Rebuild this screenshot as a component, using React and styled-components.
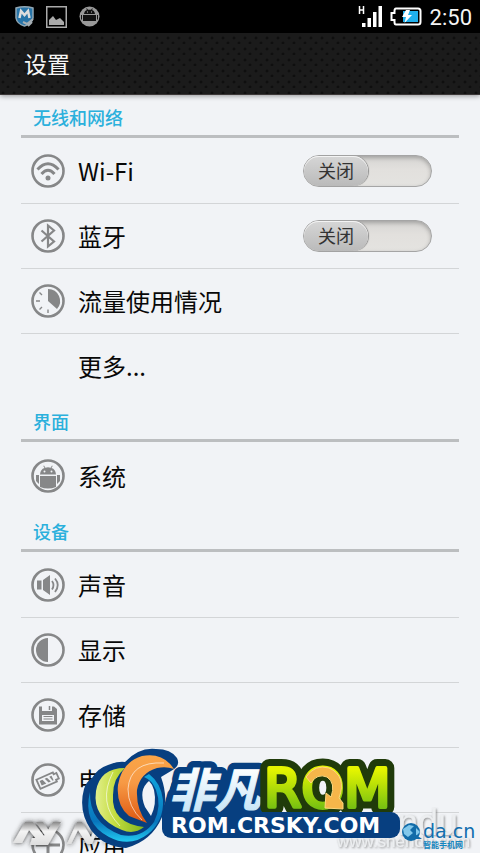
import React, { useState } from "react";
import styled, { createGlobalStyle } from "styled-components";

const GlobalStyle = createGlobalStyle`
  * { box-sizing: border-box; }
  body {
    margin: 0;
    background: #f1f3f6;
    font-family: "Noto Sans CJK SC", sans-serif;
  }
`;

const Screen = styled.div`
  position: relative;
  height: 100vh;
  overflow: hidden;
  background: #f1f3f6;
  color: #080808;
`;

const StatusBar = styled.div`
  display: flex;
  align-items: center;
  justify-content: space-between;
  height: 33px;
  padding: 0 8px 0 15px;
  background: #000;
`;

const StatusGroup = styled.div`
  display: flex;
  align-items: center;
  gap: ${(p) => p.$gap}px;
  svg { display: block; }
`;

const Clock = styled.time`
  font: 400 22px/32px Roboto, sans-serif;
  color: #f4f4f4;
  padding-top: 2px;
`;

const TitleBar = styled.header`
  display: flex;
  align-items: center;
  height: 62px;
  padding: 0 24px 2px;
  background-color: #1b1b1b;
  background-image:
    radial-gradient(ellipse 2px 2px at 3px 5px, #0f0f0f 40%, transparent),
    radial-gradient(ellipse 2px 2px at 8px 10px, #0f0f0f 40%, transparent);
  background-size: 11px 11px;
  border-bottom: 1px solid #3a3636;
  box-shadow: 0 1px 5px rgba(0, 0, 0, 0.4);
`;

const Title = styled.h1`
  margin: 0;
  font-size: 23px;
  line-height: 32px;
  font-weight: 400;
  color: #f6f6f6;
`;

const Content = styled.main`
  padding: 0 21px;
`;

const SectionTitle = styled.h2`
  display: flex;
  align-items: center;
  height: 43px;
  margin: 0;
  padding: 3px 12px 0;
  border-bottom: 3px solid #bcbec0;
  font-size: 18px;
  line-height: 24px;
  font-weight: 500;
  color: #2bb0dc;
`;

const List = styled.ul`
  list-style: none;
  margin: 0;
  padding: 1px 0 0;
`;

const Row = styled.li`
  display: flex;
  align-items: center;
  height: ${(p) => p.$height}px;
  padding: 0 27px 0 10px;
  border-bottom: 1px solid #d3d5d7;
  &:last-child { border-bottom-color: transparent; }
`;

const RowAction = styled.button`
  display: flex;
  flex: 1;
  align-items: center;
  gap: 13px;
  padding: 0;
  border: 0;
  background: none;
  font: 400 24px/34px "Noto Sans CJK SC", sans-serif;
  color: inherit;
  text-align: left;
`;

const IconSlot = styled.span`
  display: block;
  width: 34px;
  height: 34px;
  svg { display: block; }
`;

const Track = styled.button`
  display: flex;
  justify-content: ${(p) => (p.$on ? "flex-end" : "flex-start")};
  width: 129px;
  height: 32px;
  padding: 0;
  border: 1px solid #a5a5a5;
  border-radius: 16px;
  background: linear-gradient(#d6d5d3, #e2e0dd 45%, #e4e3e0);
  box-shadow: inset 0 2px 4px rgba(0, 0, 0, 0.25);
`;

const Knob = styled.span`
  display: flex;
  align-items: center;
  justify-content: center;
  width: 64px;
  height: 30px;
  padding-bottom: 2px;
  border-radius: 15px;
  background: linear-gradient(#d6d6d6, #bababa);
  box-shadow: inset 0 1px 0 #f4f4f4, 1px 0 1px #8c8c8c;
  font: 400 18px/26px "Noto Sans CJK SC", sans-serif;
  color: #333;
`;

const Overlay = styled.div`
  position: absolute;
  bottom: 0;
  ${(p) => p.$side}: ${(p) => p.$inset}px;
  pointer-events: none;
  svg { display: block; }
`;

const GREY = "#868788";

const glyphs = {
  wifi: (
    <g fill="none" stroke={GREY} strokeWidth="3">
      <path d="M6.500 15.500Q17 4 27.500 15.500M10.500 20Q17 12.500 23.500 20" />
      <circle cx="17" cy="24" r="2.500" fill={GREY} stroke="none" />
    </g>
  ),
  bluetooth: (
    <path d="M10.500 11.500L23 22.500L17 27.500V6.500L23 11.500L10.500 22.500" fill="none" stroke={GREY} strokeWidth="2.200" />
  ),
  usage: (
    <g>
      <path d="M17 17V5A12 12 0 0 1 26 25Z" fill={GREY} />
      <path d="M17 25.500V29M5 17H9M8.500 8.500L11 11M8.500 25.500L11 23" stroke={GREY} strokeWidth="1.400" />
    </g>
  ),
  android: (
    <g fill={GREY}>
      <path d="M9 15.500Q9.500 10 13.500 9L12.300 7L13 6.500L14.400 8.700Q17 8 19.600 8.700L21 6.500L21.700 7L20.500 9Q24.500 10 25 15.500ZM9 17H25V28Q17 31 9 28ZM5 16H8V25L5 22ZM26 16H29V22L26 25Z" />
      <circle cx="13.500" cy="12.500" r="1" fill="#f1f3f6" />
      <circle cx="20.500" cy="12.500" r="1" fill="#f1f3f6" />
    </g>
  ),
  sound: (
    <g>
      <path d="M6 12.500H10.500V21.500H6ZM12 12L19 7V27L12 22Z" fill={GREY} />
      <path d="M21 13Q24 17 21 21.500M24 10.500Q29.500 17 24 24" fill="none" stroke={GREY} strokeWidth="1.800" />
    </g>
  ),
  display: <path d="M17 5V29A12 12 0 0 1 17 5Z" fill={GREY} />,
  storage: (
    <g>
      <path d="M8 8.500H11V13H21V8.500H23L26 11V26.500H8Z" fill={GREY} />
      <path d="M18.500 8V12" stroke={GREY} strokeWidth="1.500" />
      <path d="M11 17H23V23H11Z" fill="#f1f3f6" />
      <path d="M12.500 18.500H21.500M12.500 21H21.500" stroke={GREY} strokeWidth="1" />
    </g>
  ),
  battery: (
    <g transform="rotate(-24 17 17)" fill="none" stroke={GREY} strokeWidth="1.800">
      <path d="M6.500 12H24.500V14H27.500V20H24.500V22H6.500Z" />
      <path d="M9 14.500H12L14 19.500H9ZM14.500 14.500H17L19 19.500H16.500ZM19.500 14.500H22V19.500H21Z" fill={GREY} stroke="none" />
    </g>
  ),
  apps: (
    <g fill="none" stroke={GREY} strokeWidth="3">
      <path d="M17 5V29M5 17H29" />
    </g>
  ),
};

function SettingIcon({ name }) {
  return (
    <IconSlot aria-hidden="true">
      {name && (
        <svg width="34" height="34" viewBox="0 0 34 34">
          <circle cx="17" cy="17" r="15.500" fill="none" stroke={GREY} strokeWidth="2.600" />
          {glyphs[name]}
        </svg>
      )}
    </IconSlot>
  );
}

function Toggle({ label }) {
  const [on, setOn] = useState(false);
  return (
    <Track type="button" role="switch" aria-checked={on} aria-label={label} $on={on} onClick={() => setOn(!on)}>
      <Knob>{on ? "开启" : "关闭"}</Knob>
    </Track>
  );
}

const sections = [
  {
    title: "无线和网络",
    rowHeight: 65,
    items: [
      { label: "Wi-Fi", icon: "wifi", toggle: true },
      { label: "蓝牙", icon: "bluetooth", toggle: true },
      { label: "流量使用情况", icon: "usage" },
      { label: "更多..." },
    ],
  },
  { title: "界面", rowHeight: 66, items: [{ label: "系统", icon: "android" }] },
  {
    title: "设备",
    rowHeight: 65,
    items: [
      { label: "声音", icon: "sound" },
      { label: "显示", icon: "display" },
      { label: "存储", icon: "storage" },
      { label: "电池", icon: "battery" },
      { label: "应用", icon: "apps" },
    ],
  },
];

function NotificationIcons() {
  return (
    <StatusGroup $gap={12} aria-hidden="true">
      <svg width="19" height="22" viewBox="0 0 19 22">
        <path d="M1 2Q9.500-.5 18 2V12Q17 18 9.500 20Q2 18 1 12Z" fill="#2774a8" stroke="#91a7b4" strokeWidth="1.500" />
        <path d="M4.500 12L6 5L9.500 9L13 5L14.500 12" fill="none" stroke="#ddd" strokeWidth="2.500" />
        <path d="M8 16L12 18L18 13M13 20L17 16" stroke="#a5aeb3" strokeWidth="2" fill="none" />
      </svg>
      <svg width="21" height="22" viewBox="0 0 21 22">
        <path d="M.75.75H20.250V21.250H.75Z" fill="none" stroke="#aaa" strokeWidth="1.500" />
        <path d="M3 19V14L7 10L10 14L14 12L18 16V19Z" fill="#aaa" />
      </svg>
      <svg width="21" height="21" viewBox="0 0 21 21">
        <circle cx="10.500" cy="10.500" r="10" fill="#999" />
        <path d="M5 8Q5.500 4.500 8 4L7 2.500H8L9 3.700H12L13 2.500H14L13 4Q15.500 4.500 16 8ZM4 9H17V15H4ZM2 9H3V14L2 13ZM18 9H19V13L18 14Z" fill="#111" />
        <path d="M8 6H9M12 6H13" stroke="#bbb" />
      </svg>
    </StatusGroup>
  );
}

function SystemStatus() {
  return (
    <StatusGroup $gap={8}>
      <svg width="24" height="22" viewBox="0 0 24 22" aria-label="信号">
        <path d="M1.500 0V8M5.500 0V8M1.500 4H5.500" stroke="#fff" strokeWidth="1.500" />
        <path d="M4 17H7.500V21H4ZM9.500 12H13V21H9.500ZM15 6H18.500V21H15ZM20.500 0H24V21H20.500Z" fill="#fff" />
      </svg>
      <svg width="32" height="19" viewBox="0 0 32 19" aria-label="充电中">
        <path d="M6 1.500H28Q30.500 1.500 30.500 4V15Q30.500 17.500 28 17.500H6Q4.500 17.500 4.500 15V13H1.500V6H4.500V4Q4.500 1.500 6 1.500Z" fill="#000" stroke="#fff" strokeWidth="2" />
        <path d="M13 4H28V15H13Z" fill="#20b0ed" />
        <path d="M16 3L12 10H16L14.500 16L22 8H18L20 3Z" fill="#fff" />
      </svg>
      <Clock>2:50</Clock>
    </StatusGroup>
  );
}

function MetalMark() {
  return (
    <svg width="136" height="38" viewBox="0 0 136 38" aria-hidden="true">
      <defs>
        <linearGradient id="metal" x1="0" y1="0" x2="0" y2="1">
          <stop offset="0" stopColor="#888" />
          <stop offset=".4" stopColor="#f4f4f4" />
          <stop offset="1" stopColor="#ddd" />
        </linearGradient>
        <filter id="metalShade" x="-20%" y="-40%" width="140%" height="180%">
          <feDropShadow dx="0" dy="0" stdDeviation="2.500" floodColor="#222" floodOpacity=".9" />
        </filter>
      </defs>
      <g fill="url(#metal)" filter="url(#metalShade)">
        <path d="M2 28L14 7H22L33 21L42 7H50L37 30H30L18 15L11 28ZM25 7H32L39 17L35 22ZM21 23H26L31 30H19Z" />
        <path d="M56 29L66 7H71L80 22L86 7H90L81 29H76L67 15L60 29ZM93 28L102 8H130L128 11H104L101 17H124L122 20H100L96 28Z" />
      </g>
    </svg>
  );
}

function RomBanner() {
  return (
    <svg width="326" height="112" viewBox="0 0 326 112" role="img" aria-label="非凡ROM ROM.CRSKY.COM">
      <defs>
        <linearGradient id="leaf" x1="0" y1="0" x2="1" y2="0">
          <stop offset="0" stopColor="#e2ef8c" />
          <stop offset=".4" stopColor="#c3dc3f" />
          <stop offset="1" stopColor="#7fb51c" />
        </linearGradient>
        <linearGradient id="flame" x1="0" y1="0" x2="0" y2="1">
          <stop offset="0" stopColor="#f9a548" />
          <stop offset=".4" stopColor="#f79a45" />
          <stop offset="1" stopColor="#dd5711" />
        </linearGradient>
        <linearGradient id="ring" x1="0" y1="0" x2="0" y2="1">
          <stop offset="0" stopColor="#10a5dc" />
          <stop offset=".7" stopColor="#0876bd" />
          <stop offset="1" stopColor="#22caf0" />
        </linearGradient>
        <linearGradient id="lime" x1="0" y1="0" x2="0" y2="1">
          <stop offset=".2" stopColor="#e5f500" />
          <stop offset=".9" stopColor="#67b914" />
        </linearGradient>
        <linearGradient id="ice" x1="0" y1="0" x2="0" y2="1">
          <stop offset=".2" stopColor="#fff" />
          <stop offset="1" stopColor="#bce1f6" />
        </linearGradient>
      </defs>
      <path d="M94 36H180V90H88Q82 86 82 80V70Z" fill="#073f80" />
      <g fontFamily="Noto Sans CJK SC, sans-serif" fontWeight="700" fontSize="46" fontStyle="italic">
        <text x="89" y="66" fill="#073f80" stroke="#073f80" strokeWidth="14" strokeLinejoin="round">非凡</text>
        <text x="89" y="66" fill="url(#ice)" stroke="url(#ice)" strokeWidth="1">非凡</text>
      </g>
      <g fontFamily="DejaVu Sans, sans-serif" fontSize="54" strokeLinejoin="round">
        <text x="184" y="66" fill="#203b0a" stroke="#203b0a" strokeWidth="18">ROM</text>
        <text x="184" y="66" fill="url(#lime)" stroke="url(#lime)" strokeWidth="4">ROM</text>
      </g>
      <path d="M226 36Q235 23 249 27Q267 35 259 57L263 62V68L245 67L246 52L251 56Q256 42 247 36Q237 32 231 42Z" fill="#f6b64a" stroke="#ffd77d" strokeWidth="1" />
      <rect x="82" y="71" width="238" height="26" rx="9" fill="#073f80" />
      <text x="91" y="92" fontFamily="DejaVu Sans, sans-serif" fontSize="22" fontWeight="700" fill="#fff">ROM.CRSKY.COM</text>
      <path d="M12 37Q18 27 28 24Q38 20 45 21Q59 6 76 8Q91 8 97 17Q101 25 91 30L81 36Q89 58 82 76Q72 100 46 107Q24 106 11 89Q-2 70 4 48Q6 41 12 37Z" fill="#073f80" />
      <path d="M10 51Q9 82 41 94Q62 98 74 81Q82 65 76 49Q72 39 64 36L69 33Q81 42 83 59Q84 80 68 93Q50 107 29 96Q2 82 10 51Z" fill="url(#ring)" />
      <path d="M45 27Q20 27 16 50Q12 77 42 89Q54 94 64 86Q31 82 33 54Q33 37 45 27Z" fill="url(#leaf)" />
      <path d="M94 28Q83 11 62 15Q42 21 38 44Q36 64 49 75L67 82Q56 68 57 49Q60 32 77 27Q86 25 94 28Z" fill="url(#flame)" />
      <path d="M69 40Q58 49 65 66L71 75Q77 63 74 49Q73 44 69 40Z" fill="#f1f3f6" />
      <path d="M33 31Q17 62 40 85M84 22Q50 20 48 48Q48 66 62 79" fill="none" stroke="#fff" strokeOpacity=".6" />
    </svg>
  );
}

function SiteMarks() {
  return (
    <svg width="148" height="48" viewBox="0 0 148 48" role="img" aria-label="www.shendu.com da.cn 智能手机网">
      <defs>
        <filter id="emboss" x="-10%" y="-20%" width="120%" height="150%">
          <feDropShadow dx="1" dy="1" stdDeviation="1" floodColor="#666" floodOpacity=".7" />
        </filter>
      </defs>
      <g filter="url(#emboss)" fill="#eceef0" fontFamily="Liberation Sans, sans-serif">
        <text x="66" y="30" fontSize="36">ndu</text>
        <text x="5" y="42" fontSize="17">www.shendu.com</text>
      </g>
      <circle cx="79" cy="27" r="9" fill="#126ca9" />
      <path d="M71 24L77 20L82 21L78 25L81 28L76 32L72 29ZM84 23L88 27L84 31Z" fill="#82c8eb" />
      <path d="M83 29L90 34L84 34Z" fill="#126ca9" />
      <text x="91" y="33" fontFamily="DejaVu Sans, sans-serif" fontSize="19" fill="#116eae">da.cn</text>
      <text x="91" y="43" fontFamily="Noto Sans CJK SC, sans-serif" fontSize="8" fontWeight="700" fill="#1486bf">智能手机网</text>
    </svg>
  );
}

export default function App() {
  return (
    <Screen>
      <GlobalStyle />
      <StatusBar>
        <NotificationIcons />
        <SystemStatus />
      </StatusBar>
      <TitleBar>
        <Title>设置</Title>
      </TitleBar>
      <Content>
        {sections.map((section) => (
          <section key={section.title}>
            <SectionTitle>{section.title}</SectionTitle>
            <List>
              {section.items.map((item) => (
                <Row key={item.label} $height={section.rowHeight}>
                  <RowAction type="button">
                    <SettingIcon name={item.icon} />
                    {item.label}
                  </RowAction>
                  {item.toggle && <Toggle label={item.label} />}
                </Row>
              ))}
            </List>
          </section>
        ))}
      </Content>
      <Overlay $side="left" $inset={11}><MetalMark /></Overlay>
      <Overlay $side="right" $inset={0}><SiteMarks /></Overlay>
      <Overlay $side="left" $inset={80}><RomBanner /></Overlay>
    </Screen>
  );
}
